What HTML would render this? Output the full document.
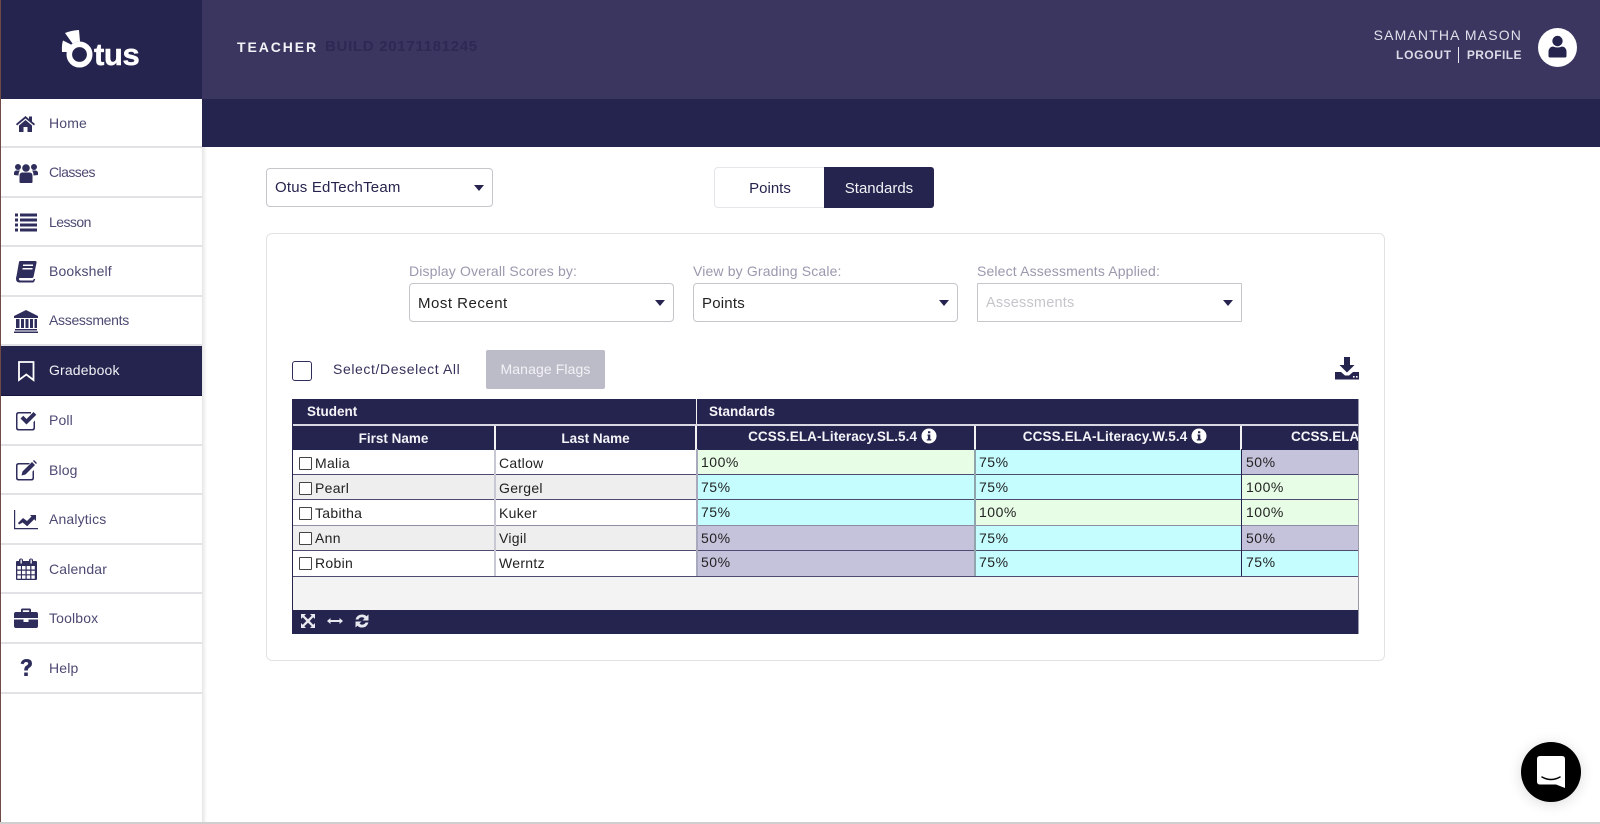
<!DOCTYPE html>
<html><head><meta charset="utf-8"><title>Otus Gradebook</title>
<style>
*{box-sizing:border-box}
html,body{margin:0;padding:0;width:1600px;height:824px;overflow:hidden;background:#fff;font-family:"Liberation Sans",sans-serif}
.a{position:absolute}
.t{position:absolute;white-space:nowrap;line-height:20px;height:20px}
.nav{position:absolute;left:1px;width:201px;border-bottom:2px solid #e2e2e6;background:#fff;color:#4c4a72;font-size:14px;letter-spacing:.15px}
.nav span{position:absolute;left:48px;top:50%;margin-top:-10px;line-height:20px}
.nav svg{position:absolute;left:12px;top:50%;margin-top:-13px;width:26px;height:26px;fill:#2f2d5c}
.sel{position:absolute;height:39px;border:1px solid #c6c6ca;border-radius:4px;background:#fff;font-size:15px;line-height:39px;padding-left:8px;color:#26244e;letter-spacing:.2px}
.sel i{position:absolute;right:8px;top:16px;width:0;height:0;border:5px solid transparent;border-top:6px solid #26244e;border-bottom:0}
.lab{position:absolute;font-size:14px;color:#9a99ae;line-height:18px;white-space:nowrap;letter-spacing:.15px}
.r{position:absolute;height:1px;background:#4d4b72;left:0;width:1066px}
.c{position:absolute;font-size:14px;color:#222;line-height:25px;white-space:nowrap;letter-spacing:.5px;padding-left:4px}
.n{position:absolute;font-size:14px;color:#222;line-height:25px;white-space:nowrap;letter-spacing:.3px;padding-left:4px}
.h{position:absolute;background:#25244e;color:#f4f4f8;font-size:13.5px;font-weight:bold;text-align:center;line-height:22px;white-space:nowrap}
.cb{position:absolute;left:6px;width:13px;height:13px;border:1px solid #444;border-radius:1px;background:#fff}
.g{background:#e7fde6}.b{background:#c5fdff}.p{background:#c5c2db}
.v{position:absolute;top:50px;height:127px;width:2px}
</style></head>
<body>
<!-- header -->
<div class="a" style="left:0;top:0;width:1600px;height:99px;background:#3a3660"></div>
<div class="a" style="left:202px;top:99px;width:1398px;height:48px;background:#25244e"></div>
<div class="a" style="left:0;top:0;width:202px;height:99px;background:#25244e"></div>
<div class="a" style="left:0;top:0;width:1px;height:824px;background:#6f4b48"></div>

<!-- logo -->
<svg class="a" style="left:55px;top:25px" width="45" height="45" viewBox="55 25 45 45">
<circle cx="79.500" cy="54.500" r="10.200" fill="none" stroke="#fff" stroke-width="5.600"/>
<path d="M65 33 Q71 30.500 79 30 L80 41.500 Q76 41.500 72.500 43.500Z" fill="#fff"/>
<path d="M63 40.500 L71 44.500 Q68.500 48 68 52 L62 52 Q61.500 45 63 40.500Z" fill="#fff"/>
</svg>
<div class="t" style="left:94px;top:39px;height:32px;line-height:32px;font-size:31px;font-weight:bold;color:#fff;letter-spacing:-.4px;-webkit-text-stroke:.5px #fff">tus</div>

<div class="t" style="left:237px;top:37px;font-size:14px;font-weight:bold;color:#f3f3f7;letter-spacing:1.9px">TEACHER</div>
<div class="t" style="left:325px;top:37px;font-size:15px;font-weight:bold;color:#2c2954;letter-spacing:.7px">BUILD 20171181245</div>

<div class="t" style="right:78px;top:25px;font-size:14px;color:#e0dfea;letter-spacing:1.15px">SAMANTHA MASON</div>
<div class="t" style="left:1396px;top:45px;font-size:12px;font-weight:bold;color:#dcdbe8;letter-spacing:.75px">LOGOUT</div>
<div class="a" style="left:1458px;top:47px;width:1px;height:16px;background:#e8e8f0"></div>
<div class="t" style="right:78px;top:45px;font-size:12px;font-weight:bold;color:#dcdbe8;letter-spacing:.45px">PROFILE</div>
<div class="a" style="left:1538px;top:28px;width:39px;height:39px;border-radius:50%;background:#fff"></div>
<svg class="a" style="left:1538px;top:28px" width="39" height="39" viewBox="0 0 39 39"><circle cx="19.500" cy="13" r="5.200" fill="#25244e"/><path d="M10.500 28v-4q0-5 4.500-5.500 4.500 2 9 0 4.500.5 4.500 5.500v4q0 1.500-1.500 1.500H12q-1.500 0-1.500-1.500z" fill="#25244e"/></svg>

<!-- sidebar -->
<div class="a" style="left:202px;top:147px;width:5px;height:675px;background:linear-gradient(90deg,#e6e6e6,#fff)"></div>
<div class="nav" style="top:99px;height:49px"><span>Home</span><svg viewBox="0 0 26 26"><path d="M12.500 6 3 14l1 1.500L12.500 8.500 21 15.500l1-1.500-3-2.500V6.500h-3v2.500zM6 15.500l6.500-5.500 6.500 5.500V22h-4.500v-5h-4v5H6z"/></svg></div>
<div class="nav" style="top:148px;height:50px"><span style="letter-spacing:-.55px">Classes</span><svg viewBox="0 0 26 26"><circle cx="5" cy="8" r="3"/><circle cx="21" cy="8" r="3"/><circle cx="13" cy="9" r="3.800"/><path d="M1 16q-.5-4 2-4.500h4q-1.500 1.500-1.500 5zM25 16q.5-4-2-4.500h-4q1.500 1.500 1.500 5zM6.500 23v-6q0-3.500 3-3.500h7q3 0 3 3.500v6q0 1-1 1h-11q-1 0-1-1z"/></svg></div>
<div class="nav" style="top:198px;height:49px"><span style="letter-spacing:-.55px">Lesson</span><svg viewBox="0 0 26 26"><path d="M2 4.500h3v3H2zM7 4.500h17v3H7zM2 9.500h3v3H2zM7 9.500h17v3H7zM2 14.500h3v3H2zM7 14.500h17v3H7zM2 19.500h3v3H2zM7 19.500h17v3H7z"/></svg></div>
<div class="nav" style="top:247px;height:50px"><span>Bookshelf</span><svg viewBox="0 0 26 26"><path d="M7 3h15q2 0 1.500 2l-3 14q-.5 1-1.500 1H7q-1.500 0-1 1.500.3 1 1.500 1H20l.8-1.500h1.500l-1 2.500q-.5 1-1.500 1H6.500q-3.500 0-3.500-4 0-1 .5-2.500L6 4q.3-1 1-1z"/><path d="M10 6.500h10v1.500H10zM9.500 10h10v1.500h-10z" fill="#fff"/></svg></div>
<div class="nav" style="top:297px;height:49px"><span style="letter-spacing:-.3px;margin-top:-11px">Assessments</span><svg viewBox="0 0 26 26"><path d="M13 2 1 8v2h24V8zM3 11h3.500v9H3zM8 11h3v9H8zM12.500 11h3v9h-3zM17 11h3v9h-3zM21.500 11H24v9h-2.500zM2 21h22v1.500H2zM1 23.500h24V25H1z"/></svg></div>
<div class="nav" style="top:346px;height:50px;background:#25244e;color:#f0f0f5;border-bottom:1px solid #14133a"><span style="margin-top:-11px">Gradebook</span><svg viewBox="0 0 26 26" style="fill:none;stroke:#fff;stroke-width:1.800"><path d="M6 4h14.500v18L13.300 16.500 6 22z"/></svg></div>
<div class="nav" style="top:396px;height:50px"><span>Poll</span><svg viewBox="0 0 26 26"><path d="M6 5h12v1.500H6Q4.500 6.500 4.500 8v12.500Q4.500 22 6 22h13q1.500 0 1.500-1.500V15l1.500-1.500v7.500q0 2.500-2.500 2.500H5.500Q3 23.500 3 21V7.500Q3 5 6 5z"/><path d="M7.500 11.500l2.800-2.800 3.200 3.300L20.500 5l2.800 2.800L13.500 17.500z"/></svg></div>
<div class="nav" style="top:446px;height:49px"><span>Blog</span><svg viewBox="0 0 26 26"><path d="M6 6h11l-1.500 1.500H6Q4.500 7.500 4.500 9v11.500Q4.500 22 6 22h12q1.500 0 1.500-1.500V14.500l1.500-1.500v8q0 2.500-2.500 2.500H5.500Q3 23.500 3 21V8.500Q3 6 6 6z"/><path d="M19 5l3 3-9.500 9.500-4 1 1-4zM20 4l1-1 3 3-1 1z"/></svg></div>
<div class="nav" style="top:495px;height:50px"><span>Analytics</span><svg viewBox="0 0 26 26"><path d="M1 4h1.200v18H25v1.200H1z"/><path d="M5 17l5-5 4 3 4.500-4.500L17 9h6v6l-1.800-1.800-7 7-4.500-3.700L6 18.500z"/></svg></div>
<div class="nav" style="top:545px;height:49px"><span>Calendar</span><svg viewBox="0 0 26 26"><path d="M3 5h3v-.5a2 2 0 0 1 4 0V5h6v-.5a2 2 0 0 1 4 0V5h3q1 0 1 1v17q0 1-1 1H4q-1 0-1-1V6q0-1 1-1zM7.500 3.500v4h1.300v-4zM17.500 3.500v4h1.300v-4zM4.300 10v3.500h3.600V10zM9 10v3.500h3.500V10zM13.700 10v3.500h3.500V10zM18.400 10v3.500h3.400V10zM4.300 14.700v3.500h3.600v-3.500zM9 14.700v3.500h3.500v-3.500zM13.700 14.700v3.500h3.500v-3.500zM18.400 14.700v3.500h3.400v-3.500zM4.300 19.400v3.300h3.600v-3.300zM9 19.400v3.300h3.500v-3.300zM13.700 19.400v3.300h3.500v-3.300zM18.400 19.400v3.300h3.400v-3.300z" fill-rule="evenodd"/></svg></div>
<div class="nav" style="top:594px;height:50px"><span>Toolbox</span><svg viewBox="0 0 26 26"><path d="M8 7V5q0-1.500 1.500-1.500h7Q18 3.500 18 5v2h5q2 0 2 2v4H1V9q0-2 2-2zM9.800 7h6.400V5.200H9.800zM1 14.500h9.500v2.500h5v-2.500H25V21q0 2-2 2H3q-2 0-2-2z" fill-rule="evenodd"/></svg></div>
<div class="nav" style="top:644px;height:50px"><span>Help</span><svg viewBox="0 0 26 26"><path d="M7.500 8.500Q9 4 13.500 4 19 4 19 8.500q0 3-3 4.500-1.200.7-1.200 2.500h-3.600q0-3.500 2-4.700 2-1.200 2-2.300 0-1.500-2-1.500-1.700 0-2.700 2.200zM11.200 17.500h3.600V21h-3.600z"/></svg></div>

<!-- top selects -->
<div class="sel" style="left:266px;top:168px;width:227px;color:#26244e;line-height:37px">Otus EdTechTeam<i></i></div>
<div class="a" style="left:714px;top:167px;width:111px;height:41px;border:1px solid #e6e6ea;border-right:0;border-radius:4px 0 0 4px;text-align:center;font-size:15px;line-height:42px;color:#26244e">Points</div>
<div class="a" style="left:824px;top:167px;width:110px;height:41px;background:#25244e;border-radius:0 3px 3px 0;text-align:center;font-size:15px;line-height:43px;color:#f2f2f6">Standards</div>

<!-- card -->
<div class="a" style="left:266px;top:233px;width:1119px;height:428px;border:1px solid #e2e2e4;border-radius:6px"></div>
<div class="lab" style="left:409px;top:262px">Display Overall Scores by:</div>
<div class="lab" style="left:693px;top:262px">View by Grading Scale:</div>
<div class="lab" style="left:977px;top:262px">Select Assessments Applied:</div>
<div class="sel" style="left:409px;top:283px;width:265px;color:#222;letter-spacing:.5px">Most Recent<i></i></div>
<div class="sel" style="left:693px;top:283px;width:265px;color:#222">Points<i></i></div>
<div class="sel" style="left:977px;top:283px;width:265px;border-radius:1px;color:#c5c5cc;font-size:14.500px;">Assessments<i></i></div>

<div class="a" style="left:292px;top:361px;width:20px;height:20px;border:1px solid #2f2d5c;border-radius:3px"></div>
<div class="t" style="left:333px;top:359px;font-size:14px;color:#34325a;letter-spacing:.6px">Select/Deselect All</div>
<div class="a" style="left:486px;top:350px;width:119px;height:39px;background:#bcbcc9;border-radius:2px;text-align:center;color:#f2f2f6;font-size:14px;line-height:38px;letter-spacing:.1px">Manage Flags</div>
<svg class="a" style="left:1334px;top:356px" width="26" height="24" viewBox="0 0 26 24"><path d="M10 1h6v8h4.500L13 16.500 5.500 9H10z" fill="#25244e"/><path d="M1 16h6l4 3.500h4l4-3.500h6v7.500H1z" fill="#25244e"/><rect x="19" y="20" width="1.600" height="1.600" fill="#fff"/><rect x="22" y="20" width="1.600" height="1.600" fill="#fff"/></svg>

<!-- table -->
<div class="a" style="left:292px;top:399px;width:1067px;height:235px;overflow:hidden;background:#f3f3f3;border-left:1px solid #25244e;border-right:1px solid #9a9aaa">
  <div class="h" style="left:0;top:0;width:403px;height:25px;text-align:left;padding-left:14px;line-height:26px">Student</div>
  <div class="h" style="left:404px;top:0;width:662px;height:25px;text-align:left;padding-left:12px;line-height:26px">Standards</div>
  <div class="a" style="left:0;top:25px;width:1066px;height:2px;background:#d8d8e2"></div>
  <div class="h" style="left:0;top:27px;width:201px;height:23.500px;line-height:26px">First Name</div>
  <div class="h" style="left:203px;top:27px;width:199px;height:23.500px;line-height:26px">Last Name</div>
  <div class="h" style="left:404px;top:27px;width:277px;height:23.500px;padding-left:14px;letter-spacing:.08px;line-height:21px">CCSS.ELA-Literacy.SL.5.4 <svg width="16" height="16" viewBox="0 0 16 16" style="vertical-align:-3px"><circle cx="8" cy="8" r="7.500" fill="#fff"/><path d="M6.500 6.500H9.300V11.300H10.300V12.500H5.800V11.300H6.900V7.700H6.500zM7 3.200h2.300v2H7z" fill="#25244e"/></svg></div>
  <div class="h" style="left:683px;top:27px;width:264px;height:23.500px;padding-left:14px;letter-spacing:.12px;line-height:21px">CCSS.ELA-Literacy.W.5.4 <svg width="16" height="16" viewBox="0 0 16 16" style="vertical-align:-3px"><circle cx="8" cy="8" r="7.500" fill="#fff"/><path d="M6.500 6.500H9.300V11.300H10.300V12.500H5.800V11.300H6.900V7.700H6.500zM7 3.200h2.300v2H7z" fill="#25244e"/></svg></div>
  <div class="h" style="left:949px;top:27px;width:117px;height:23.500px;text-align:left;padding-left:49px;overflow:hidden;line-height:21px">CCSS.ELA-Literacy</div>

  <!-- row 1 -->
  <div class="a" style="left:0;top:50.500px;width:404px;height:25px;background:#fff"></div>
  <div class="cb" style="top:58px"></div><div class="n" style="left:18px;top:52px">Malia</div><div class="n" style="left:202px;top:52px">Catlow</div>
  <div class="c g" style="left:404px;top:50.500px;width:278px;height:25px">100%</div><div class="c b" style="left:682px;top:50.500px;width:267px;height:25px">75%</div><div class="c p" style="left:949px;top:50.500px;width:117px;height:25px">50%</div>
  <!-- row 2 -->
  <div class="a" style="left:0;top:75.500px;width:404px;height:25px;background:#eee"></div>
  <div class="cb" style="top:83px"></div><div class="n" style="left:18px;top:77px">Pearl</div><div class="n" style="left:202px;top:77px">Gergel</div>
  <div class="c b" style="left:404px;top:75.500px;width:278px;height:25px">75%</div><div class="c b" style="left:682px;top:75.500px;width:267px;height:25px">75%</div><div class="c g" style="left:949px;top:75.500px;width:117px;height:25px">100%</div>
  <!-- row 3 -->
  <div class="a" style="left:0;top:100.500px;width:404px;height:26px;background:#fff"></div>
  <div class="cb" style="top:108px"></div><div class="n" style="left:18px;top:102px">Tabitha</div><div class="n" style="left:202px;top:102px">Kuker</div>
  <div class="c b" style="left:404px;top:100.500px;width:278px;height:26px">75%</div><div class="c g" style="left:682px;top:100.500px;width:267px;height:26px">100%</div><div class="c g" style="left:949px;top:100.500px;width:117px;height:26px">100%</div>
  <!-- row 4 -->
  <div class="a" style="left:0;top:126.500px;width:404px;height:24.500px;background:#eee"></div>
  <div class="cb" style="top:133px"></div><div class="n" style="left:18px;top:127px">Ann</div><div class="n" style="left:202px;top:127px">Vigil</div>
  <div class="c p" style="left:404px;top:126.500px;width:278px;height:24.500px">50%</div><div class="c b" style="left:682px;top:126.500px;width:267px;height:24.500px">75%</div><div class="c p" style="left:949px;top:126.500px;width:117px;height:24.500px">50%</div>
  <!-- row 5 -->
  <div class="a" style="left:0;top:151px;width:404px;height:26px;background:#fff"></div>
  <div class="cb" style="top:158px"></div><div class="n" style="left:18px;top:152px">Robin</div><div class="n" style="left:202px;top:152px">Werntz</div>
  <div class="c p" style="left:404px;top:151px;width:278px;height:26px">50%</div><div class="c b" style="left:682px;top:151px;width:267px;height:26px">75%</div><div class="c b" style="left:949px;top:151px;width:117px;height:26px">75%</div>

  <div class="r" style="top:75px"></div><div class="r" style="top:100px"></div><div class="r" style="top:126px;background:#8d8ca2"></div><div class="r" style="top:150.500px"></div><div class="r" style="top:176.500px"></div>
  <div class="v" style="left:201px;background:#c8c8d2"></div>
  <div class="v" style="left:403px;background:#a9a9bd"></div>
  <div class="v" style="left:681px;width:1.500px;background:#8fa4ad"></div>
  <div class="v" style="left:948px;width:1px;background:#25244e"></div>

  <!-- footer -->
  <div class="a" style="left:0;top:211px;width:1066px;height:24px;background:#25244e"></div>
  <svg class="a" style="left:7px;top:214px" width="16" height="16" viewBox="0 0 16 16"><path d="M1 1h5L4.300 2.700 8 6.300 11.700 2.700 10 1h5v5l-1.700-1.700L9.700 8l3.600 3.700L15 10v5h-5l1.700-1.700L8 9.700 4.300 13.300 6 15H1v-5l1.700 1.700L6.300 8 2.700 4.300 1 6z" fill="#e8e8f0"/></svg>
  <svg class="a" style="left:34px;top:214px" width="16" height="16" viewBox="0 0 16 16"><path d="M0 8l3.500-3v2h9V5L16 8l-3.500 3V9h-9v2z" fill="#e8e8f0"/></svg>
  <svg class="a" style="left:61px;top:214px" width="16" height="16" viewBox="0 0 16 16"><path d="M1.500 6.500Q3 1.500 8 1.500q2.900 0 4.500 1.800L14.500 1.500v6h-6l2-2Q9.500 4.300 8 4.300q-2.600 0-3.500 2.200zM14.500 9.500Q13 14.500 8 14.500q-2.900 0-4.500-1.800L1.500 14.500v-6h6l-2 2Q6.500 11.700 8 11.700q2.600 0 3.500-2.200z" fill="#e8e8f0"/></svg>
</div>

<!-- chat bubble -->
<div class="a" style="left:1521px;top:742px;width:60px;height:60px;border-radius:50%;background:#000;box-shadow:0 2px 14px rgba(0,0,0,.14)"></div>
<svg class="a" style="left:1521px;top:742px" width="60" height="60" viewBox="0 0 60 60"><path d="M19 14h22q3 0 3 3v29l-9-3.500H19q-3 0-3-3V17q0-3 3-3z" fill="#fff"/><path d="M21 35q9 5 18 0" fill="none" stroke="#000" stroke-width="1.500" stroke-linecap="round"/></svg>

<div class="a" style="left:0;top:822px;width:1600px;height:2px;background:#cfcfcf"></div>
</body></html>
